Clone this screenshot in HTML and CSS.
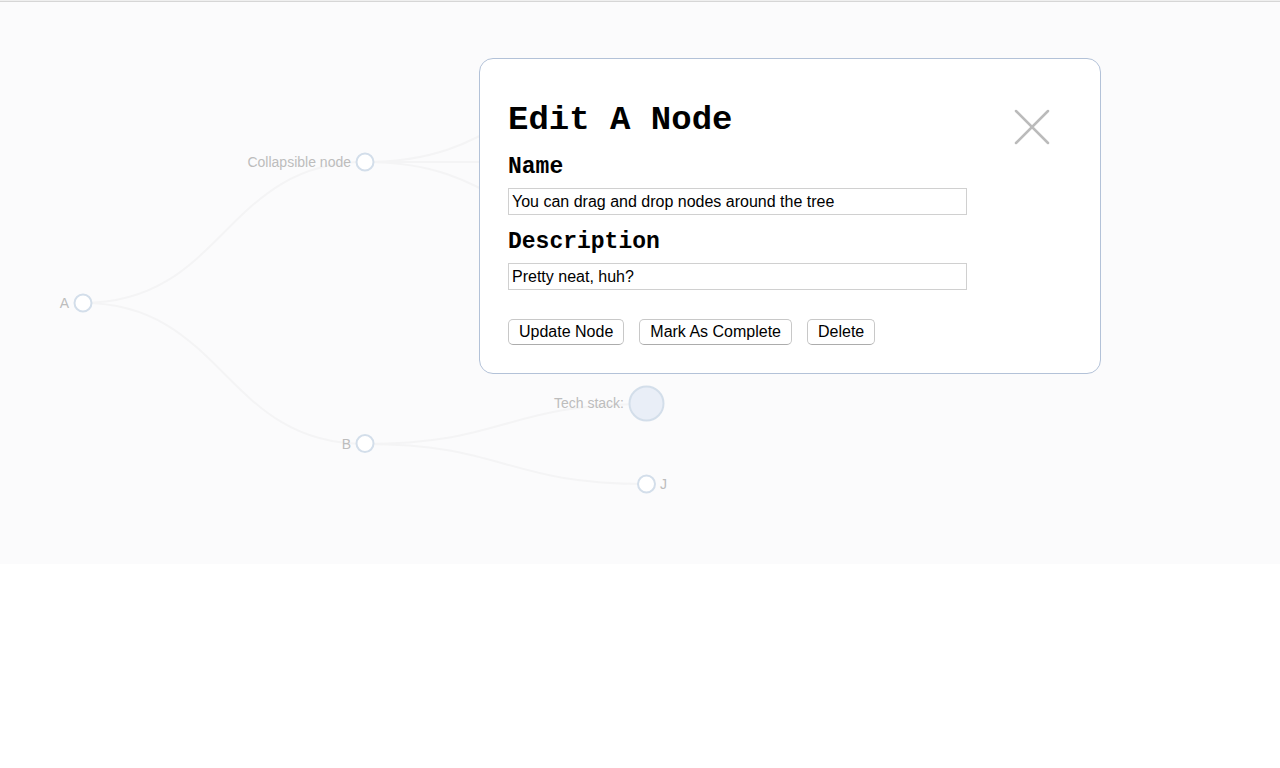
FILE: index.html
```html
<!DOCTYPE html>
<html lang="en">
<head>
<meta charset="utf-8">
<meta name="viewport" content="width=device-width, initial-scale=1">
<title>Edit A Node</title>
<link rel="stylesheet" href="styles.css">
</head>
<body>
<main class="workspace">
  <svg class="tree" width="1280" height="562" viewBox="0 2 1280 562" role="img" aria-label="Node tree">
    <g class="links">
      <path d="M83 303C224 303 224 162 365 162"/>
      <path d="M83 303C224 303 224 444 365 444"/>
      <path d="M365 162C505 162 505 82 646 82"/>
      <path d="M365 162H646"/>
      <path d="M365 162C505 162 505 242 646 242"/>
      <path d="M365 444C505 444 505 404 646 404"/>
      <path d="M365 444C505 444 505 484 646 484"/>
    </g>
    <g class="nodes">
      <circle cx="83" cy="303" r="8.5"/>
      <circle cx="365" cy="162" r="8.5"/>
      <circle cx="365" cy="443.500" r="8.5"/>
      <circle class="collapsed" cx="646.500" cy="403.500" r="17"/>
      <circle cx="646.500" cy="484" r="8.5"/>
    </g>
    <g class="labels">
      <text class="before" x="69" y="308">A</text>
      <text class="before" x="351" y="167">Collapsible node</text>
      <text class="before" x="351" y="449">B</text>
      <text class="before" x="624" y="408">Tech stack:</text>
      <text x="660" y="489">J</text>
    </g>
  </svg>
  <section class="dialog" role="dialog" aria-labelledby="dialog-title">
    <form class="form">
      <h1 class="title" id="dialog-title">Edit A Node</h1>
      <label class="label" for="name">Name</label>
      <input class="field" id="name" type="text" value="You can drag and drop nodes around the tree">
      <label class="label" for="description">Description</label>
      <input class="field" id="description" type="text" value="Pretty neat, huh?">
      <div class="actions">
        <button class="button" type="button">Update Node</button>
        <button class="button" type="button">Mark As Complete</button>
        <button class="button" type="button">Delete</button>
      </div>
    </form>
    <button class="close" type="button" aria-label="Close">
      <svg class="cross" width="36" height="36" viewBox="0 0 36 36"><path d="M2 2L34 34M34 2L2 34"/></svg>
    </button>
  </section>
</main>
</body>
</html>
```

FILE: styles.css
```css
* {
  box-sizing: border-box;
}

body {
  margin: 0;
  border-top: 1px solid #efefef;
  background: #fff;
  font-family: "Liberation Sans", Arial, sans-serif;
}

.workspace {
  position: relative;
  border-top: 1px solid #d6d6d6;
  background: #fbfbfc;
}

.tree {
  display: block;
}

.links path {
  fill: none;
  stroke: #f4f4f5;
  stroke-width: 2;
}

.nodes circle {
  fill: #fff;
  stroke: #d3deea;
  stroke-width: 2;
}

.nodes .collapsed {
  fill: #e9eef7;
}

.labels text {
  fill: #bdbdbd;
  font-size: 14px;
}

.labels .before {
  text-anchor: end;
}

.dialog {
  position: absolute;
  top: 56px;
  left: 479px;
  display: flex;
  justify-content: space-between;
  align-items: flex-start;
  width: 622px;
  padding: 41px 50px 28px 28px;
  border: 1px solid #b3c2d8;
  border-radius: 14px;
  background: #fff;
}

.form {
  display: flex;
  flex-direction: column;
  width: 459px;
}

.title {
  margin: 0 0 13px;
  font: bold 34px/40px "Liberation Mono", "Courier New", monospace;
}

.label {
  margin-bottom: 7px;
  font: bold 23px/28px "Liberation Mono", "Courier New", monospace;
}

.field {
  height: 27px;
  margin: 0 0 13px;
  padding: 0 3px;
  border: 1px solid #d0d0d0;
  background: #fff;
  color: #000;
  font: 16px/20px "Liberation Sans", Arial, sans-serif;
}

.actions {
  display: flex;
  gap: 15px;
  margin-top: 16px;
}

.button {
  height: 26px;
  padding: 0 10px;
  border: 1px solid #c8c8c8;
  border-bottom-color: #acacac;
  border-radius: 5px;
  background: #fff;
  color: #000;
  font: 16px/22px "Liberation Sans", Arial, sans-serif;
}

.close {
  margin-top: 9px;
  padding: 0;
  border: 0;
  background: none;
}

.cross {
  display: block;
  fill: none;
  stroke: #bbb;
  stroke-width: 2.5;
  stroke-linecap: round;
}
```
